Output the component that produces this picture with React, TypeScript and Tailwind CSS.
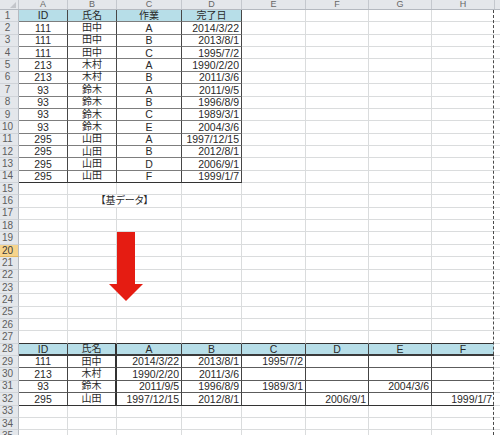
const COLS = ["A", "B", "C", "D", "E", "F", "G", "H"];
const WIDTHS = ["w-[49px]", "w-[49px]", "w-[65px]", "w-[60px]", "w-[64px]", "w-[63px]", "w-[63px]", "w-[62px]"];

const baseHead = ["ID", "氏名", "作業", "完了日"];
const baseData = [
  ["111", "田中", "A", "2014/3/22"],
  ["111", "田中", "B", "2013/8/1"],
  ["111", "田中", "C", "1995/7/2"],
  ["213", "木村", "A", "1990/2/20"],
  ["213", "木村", "B", "2011/3/6"],
  ["93", "鈴木", "A", "2011/9/5"],
  ["93", "鈴木", "B", "1996/8/9"],
  ["93", "鈴木", "C", "1989/3/1"],
  ["93", "鈴木", "E", "2004/3/6"],
  ["295", "山田", "A", "1997/12/15"],
  ["295", "山田", "B", "2012/8/1"],
  ["295", "山田", "D", "2006/9/1"],
  ["295", "山田", "F", "1999/1/7"],
];

const pivotHead = ["ID", "氏名", "A", "B", "C", "D", "E", "F"];
const pivotData = [
  ["111", "田中", "2014/3/22", "2013/8/1", "1995/7/2", "", "", ""],
  ["213", "木村", "1990/2/20", "2011/3/6", "", "", "", ""],
  ["93", "鈴木", "2011/9/5", "1996/8/9", "1989/3/1", "", "2004/3/6", ""],
  ["295", "山田", "1997/12/15", "2012/8/1", "", "2006/9/1", "", "1999/1/7"],
];

type Spec = {
  text?: string;
  align?: "c" | "r";
  bg?: string;
  r: string;
  b: string;
};

function spec(row: number, col: number): Spec {
  const s: Spec = {
    r: col === 7 ? "border-r-0" : "border-r border-r-[#dadcdd]",
    b: "border-b border-b-[#dadcdd]",
  };

  // 基データ table (rows 1-14, A-D)
  if (row >= 1 && row <= 14 && col <= 3) {
    s.r = "border-r border-r-[#474747]";
    s.b = row === 14 ? "border-b border-b-[#333]" : "border-b border-b-[#7d7d7d]";
    if (row === 1) {
      s.bg = "bg-[#b7dee8]";
      s.text = baseHead[col];
      s.align = "c";
    } else {
      s.text = baseData[row - 2][col];
      s.align = col === 3 ? "r" : "c";
    }
  }

  // top edge of the pivot table
  if (row === 27 && col <= 7) s.b = "border-b border-b-[#333]";

  // pivot table (rows 28-32, A-H)
  if (row >= 28 && row <= 32 && col <= 7) {
    if (col === 1) s.r = "border-r-2 border-r-[#333]";
    else if (col < 7) s.r = "border-r border-r-[#444]";
    if (row === 28) s.b = "border-b-2 border-b-[#3a3a3a]";
    else if (row === 32) s.b = "border-b border-b-[#333]";
    else s.b = "border-b border-b-[#5c5c5c]";
    if (row === 28) {
      s.bg = "bg-[#b7dee8]";
      s.text = pivotHead[col];
      s.align = "c";
    } else {
      s.text = pivotData[row - 29][col];
      s.align = col <= 1 ? "c" : "r";
    }
  }
  return s;
}

function Cell({ row, col }: { row: number; col: number }) {
  const s = spec(row, col);
  const jp = s.text && /[^\x00-\x7f]/.test(s.text);
  return (
    <div
      className={`${WIDTHS[col]} shrink-0 h-full flex items-center px-[2px] leading-none whitespace-nowrap ${
        s.align === "r" ? "justify-end" : "justify-center"
      } ${jp ? "text-[10px]" : "text-[10.5px]"} ${s.bg ?? ""} ${s.r} ${s.b}`}
    >
      {s.text}
    </div>
  );
}

function RowHead({ row }: { row: number }) {
  const sel = row === 20;
  return (
    <div
      className={`w-[19px] shrink-0 h-full flex items-center justify-center pr-[3px] text-[10px] leading-none border-r border-r-[#b4b9c0] border-b ${
        sel ? "bg-[#f6d48c] text-[#3a3a3a] border-b-[#e3b862]" : "bg-[#e4e7eb] text-[#5e5e5e] border-b-[#d0d4d9]"
      }`}
    >
      {row}
    </div>
  );
}

function SheetRow({ row }: { row: number }) {
  if (row === 16) {
    // B16:C16 merged
    return (
      <div className="flex h-[12.37px]">
        <RowHead row={row} />
        <Cell row={row} col={0} />
        <div className="w-[114px] shrink-0 h-full flex items-center justify-center text-[10px] leading-none [font-feature-settings:'palt'] border-r border-r-[#dadcdd] border-b border-b-[#dadcdd]">
          【基データ】
        </div>
        {[3, 4, 5, 6, 7].map((c) => (
          <Cell key={c} row={row} col={c} />
        ))}
        <div className="flex-1 h-full border-b border-b-[#dadcdd]" />
      </div>
    );
  }
  return (
    <div className="flex h-[12.37px]">
      <RowHead row={row} />
      {COLS.map((_, c) => (
        <Cell key={c} row={row} col={c} />
      ))}
      <div className="flex-1 h-full border-b border-b-[#dadcdd]" />
    </div>
  );
}

export default function App() {
  const rows = Array.from({ length: 35 }, (_, i) => i + 1);
  return (
    <div className="relative w-[500px] h-[435px] overflow-hidden bg-white text-[#2a2a2a] font-['Liberation_Sans','Noto_Sans_CJK_JP',sans-serif]">
      {/* column headers */}
      <div className="flex h-[10px] bg-[#e4e7eb] border-b border-b-[#b4b9c0]">
        <div className="relative w-[19px] shrink-0 h-full border-r border-r-[#c4c8ce]">
          <svg className="absolute left-[10px] top-[2px]" width="6" height="6" viewBox="0 0 6 6">
            <polygon points="6,0 6,6 0,6" fill="#c3c6cb" />
          </svg>
        </div>
        {COLS.map((l, i) => (
          <div
            key={l}
            className={`${WIDTHS[i]} shrink-0 h-full flex items-center justify-center text-[9px] leading-none text-[#666] ${
              i === 7 ? "" : "border-r border-r-[#c4c8ce]"
            }`}
          >
            {l}
          </div>
        ))}
        <div className="flex-1 h-full border-l border-l-[#c4c8ce]" />
      </div>

      {rows.map((r) => (
        <SheetRow key={r} row={r} />
      ))}

      {/* page break */}
      <div className="absolute left-[493px] top-[10px] bottom-0 border-l border-dashed border-l-[#4a4a4a]" />

      {/* red arrow */}
      <svg className="absolute left-[109px] top-[232px]" width="35" height="70" viewBox="0 0 35 70">
        <polygon points="8,0 26,0 26,52 34,52 17,69 0,52 8,52" fill="#e51c12" />
      </svg>
    </div>
  );
}
